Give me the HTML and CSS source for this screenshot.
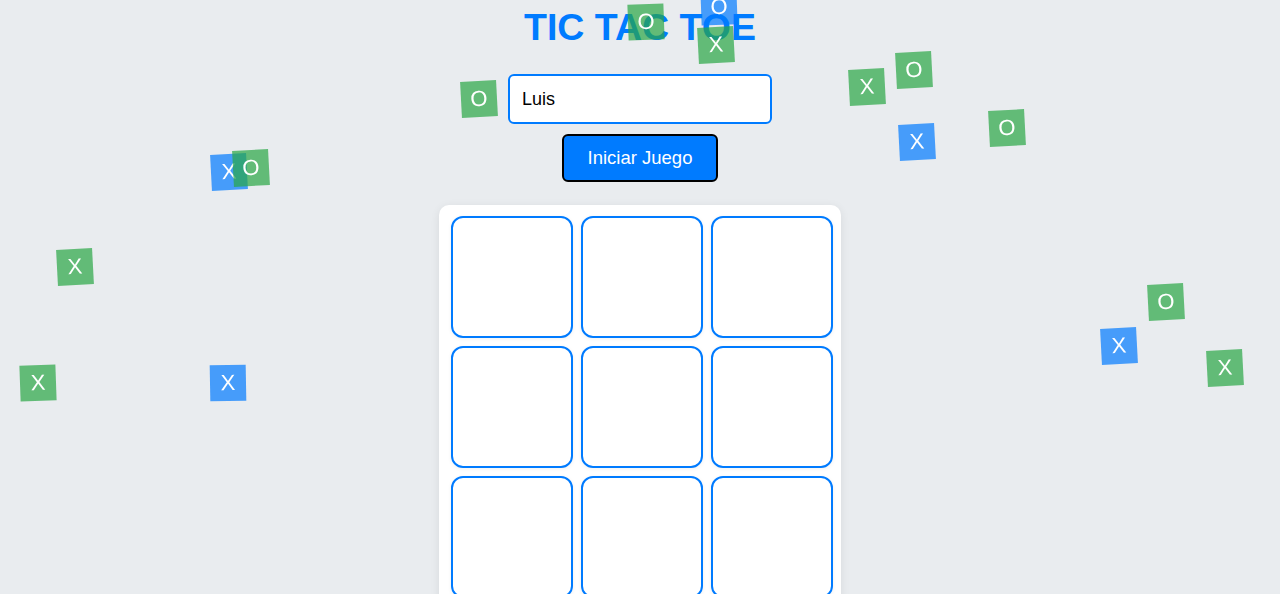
FILE: index.html
```html
<!DOCTYPE html>
<html lang="es">
<head>
<meta charset="utf-8">
<title>Tic Tac Toe</title>
<link rel="stylesheet" href="styles.css">
</head>
<body>
<main class="app">
  <h1 class="title">TIC TAC TOE</h1>
  <input class="name-input" type="text" value="Luis">
  <button class="start-btn">Iniciar Juego</button>
  <div class="board">
    <div class="cell"></div><div class="cell"></div><div class="cell"></div>
    <div class="cell"></div><div class="cell"></div><div class="cell"></div>
    <div class="cell"></div><div class="cell"></div><div class="cell"></div>
  </div>
</main>
<div class="bg-tiles">
  <span class="tile green" style="left:628px;top:4px;transform:rotate(-2deg)">O</span>
  <span class="tile blue" style="left:701px;top:-11px;transform:rotate(-2deg)">O</span>
  <span class="tile green" style="left:698px;top:27px;transform:rotate(-3deg)">X</span>
  <span class="tile green" style="left:461px;top:81px;transform:rotate(-3deg)">O</span>
  <span class="tile blue" style="left:211px;top:154px;transform:rotate(-3deg)">X</span>
  <span class="tile green" style="left:233px;top:150px;transform:rotate(-3deg)">O</span>
  <span class="tile green" style="left:57px;top:249px;transform:rotate(-3deg)">X</span>
  <span class="tile green" style="left:20px;top:365px;transform:rotate(-2deg)">X</span>
  <span class="tile blue" style="left:210px;top:365px;transform:rotate(-1deg)">X</span>
  <span class="tile green" style="left:849px;top:69px;transform:rotate(-3deg)">X</span>
  <span class="tile green" style="left:896px;top:52px;transform:rotate(-3deg)">O</span>
  <span class="tile blue" style="left:899px;top:124px;transform:rotate(-3deg)">X</span>
  <span class="tile green" style="left:989px;top:110px;transform:rotate(-3deg)">O</span>
  <span class="tile green" style="left:1148px;top:284px;transform:rotate(-3deg)">O</span>
  <span class="tile blue" style="left:1101px;top:328px;transform:rotate(-3deg)">X</span>
  <span class="tile green" style="left:1207px;top:350px;transform:rotate(-3deg)">X</span>
</div>
</body>
</html>
```

FILE: styles.css
```css
html, body {
  margin: 0;
  padding: 0;
}
body {
  background: #e9ecef;
  font-family: "Liberation Sans", Arial, sans-serif;
  min-height: 100vh;
  overflow: hidden;
}
.app {
  display: flex;
  flex-direction: column;
  align-items: center;
}
.title {
  margin: 6px 0 25px;
  font-size: 37.5px;
  font-weight: bold;
  color: #007bff;
  line-height: 43px;
}
.name-input {
  box-sizing: border-box;
  width: 264px;
  height: 50px;
  border: 2px solid #007bff;
  border-radius: 6px;
  padding: 0 12px;
  font-family: "Liberation Sans", Arial, sans-serif;
  font-size: 18px;
  color: #000;
  background: #fff;
  outline: none;
}
.start-btn {
  box-sizing: border-box;
  margin-top: 10px;
  width: 156px;
  height: 48px;
  background: #007bff;
  color: #fff;
  border: 2px solid #000;
  border-radius: 6px;
  font-family: "Liberation Sans", Arial, sans-serif;
  font-size: 18.5px;
}
.board {
  box-sizing: border-box;
  margin-top: 23px;
  width: 402px;
  padding: 11px 8px 11px 12px;
  background: #fff;
  border-radius: 10px;
  box-shadow: 0 2px 10px rgba(0, 0, 0, 0.08);
  display: grid;
  grid-template-columns: repeat(3, 122px);
  grid-auto-rows: 122px;
  gap: 8px;
}
.cell {
  box-sizing: border-box;
  border: 2px solid #007bff;
  border-radius: 12px;
  background: #fff;
  box-shadow: 0 1px 4px rgba(0, 0, 0, 0.06);
}
.bg-tiles {
  position: fixed;
  inset: 0;
  pointer-events: none;
}
.tile {
  position: absolute;
  width: 36px;
  height: 36px;
  display: flex;
  align-items: center;
  justify-content: center;
  color: #fff;
  font-size: 22px;
  font-family: "Liberation Sans", Arial, sans-serif;
}
.tile.green {
  background: rgba(40, 167, 69, 0.7);
}
.tile.blue {
  background: rgba(0, 123, 255, 0.7);
}
```
